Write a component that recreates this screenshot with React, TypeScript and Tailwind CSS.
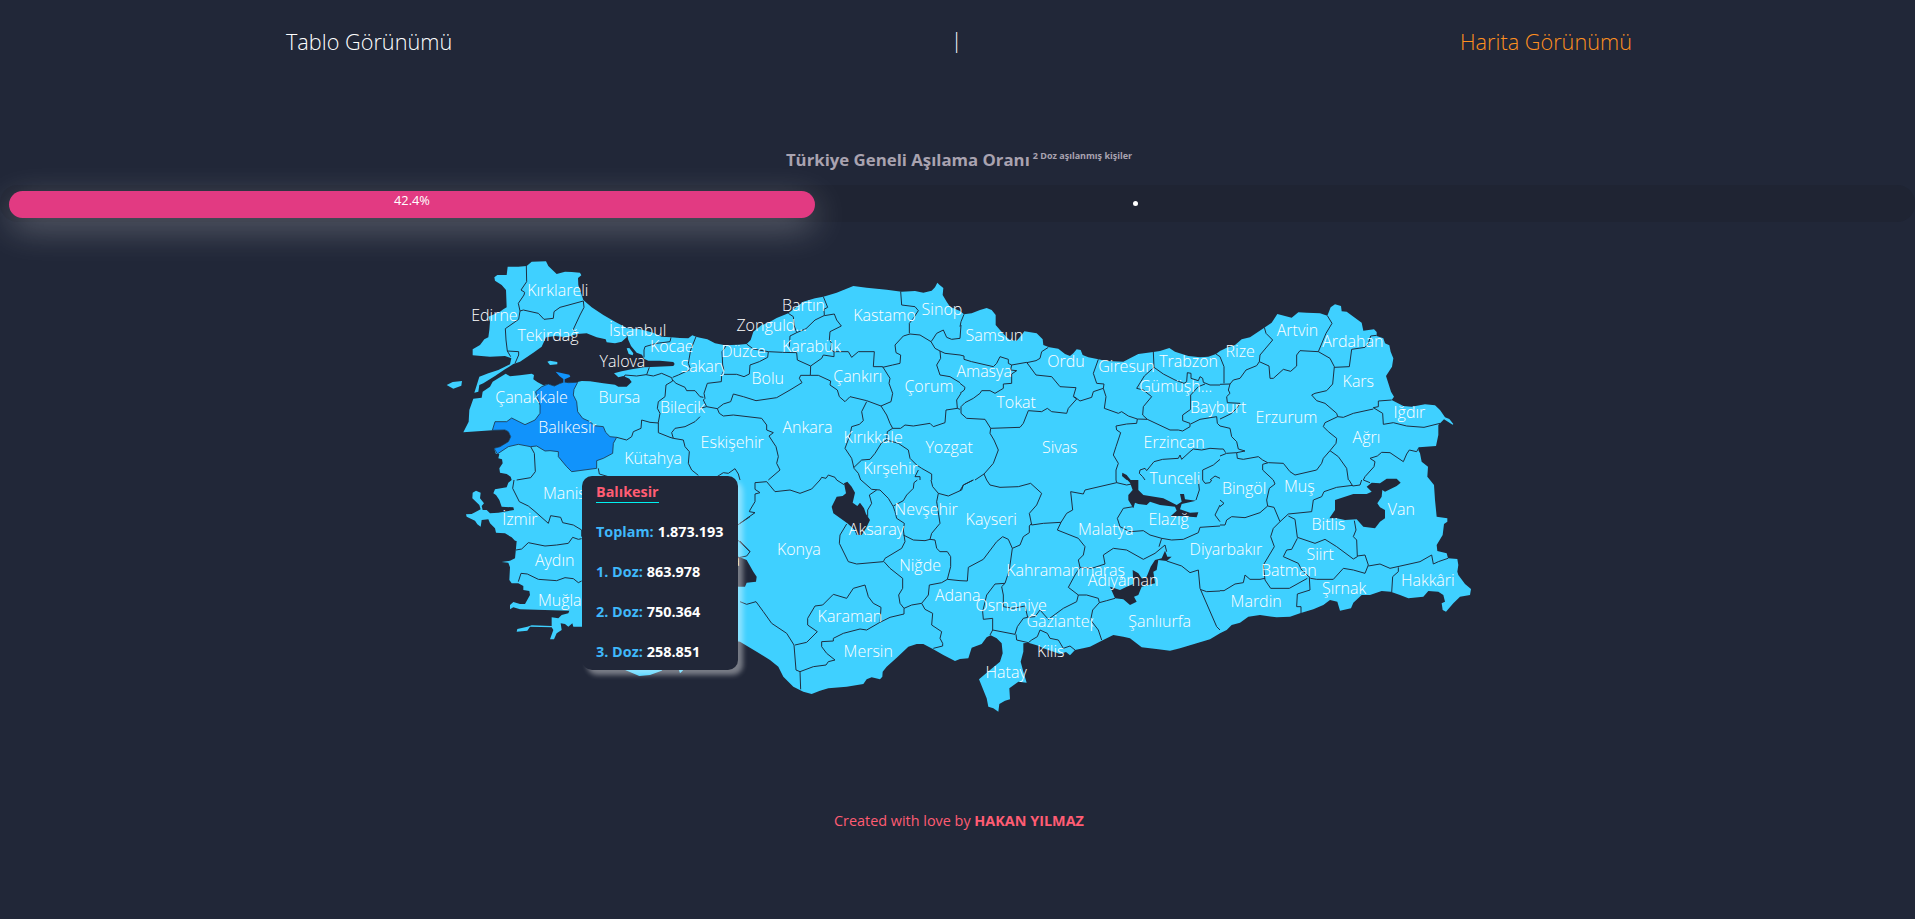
import React from 'react';

const SEA = '#212738';
const LAND = '#3fd0ff';
const ACTIVE = '#1193fb';

// The map is digitised on eight sheets; each sheet stores points at three units per map pixel.
const SHEETS = {
  A: [440, 250],
  B: [700, 250],
  C: [960, 250],
  D: [1220, 250],
  E: [440, 480],
  F: [740, 480],
  G: [960, 480],
  H: [1220, 480],
} as const;

type Sheet = keyof typeof SHEETS;

function project(sheet: Sheet, points: string): string {
  const [ox, oy] = SHEETS[sheet];
  return points
    .trim()
    .split(/\s+/)
    .map((pair) => {
      const [x, y] = pair.split(',').map(Number);
      return `${(ox + x / 3).toFixed(2)},${(oy + y / 3).toFixed(2)}`;
    })
    .join(' ');
}

const anatolia: [Sheet, string][] = [
  ['A', '70,547 86,515 88,480 100,446 125,443 128,425 150,410 158,395 175,385 197,371 210,379 240,376 275,371 282,375 280,388 293,397 310,406 325,402 343,408 358,401 372,396 385,398 413,396 425,393 450,394 490,400 525,404 535,410 560,410 575,396 568,386 550,378 535,382 522,370 545,364 575,358 612,352 650,350 700,348 704,342 700,336 660,332 625,332 612,326 606,314 590,308 573,288 564,268 560,235 600,238 640,248 665,260 693,262 720,264 745,265 757,256 768,260 780,263'],
  ['B', '22,268 45,280 75,286 115,284 140,282 152,270 160,245 185,225 205,218 230,204 265,190 290,170 310,155 345,145 370,140 410,128 460,108 500,113 560,119 605,125 645,123 670,128 695,122 705,112 712,98 718,104 730,114 728,135 740,155 750,170'],
  ['C', '0,183 12,193 35,190 60,180 80,174 95,180 107,195 107,225 120,240 140,262 150,270 170,272 185,255 193,244 230,250 248,268 250,285 268,292 295,296 315,312 330,318 340,310 350,298 362,300 368,315 385,322 415,328 440,333 490,335 510,325 535,312 580,306 600,303 628,294 645,305 685,318 720,322 745,320 768,312 780,303'],
  ['D', '20,293 45,285 65,268 90,262 135,232 155,218 172,192 215,203 235,187 260,188 300,190 322,197 332,172 345,163 363,168 365,184 380,185 425,218 430,242 462,238 470,246 470,258 490,265 495,280 508,286 512,305 520,325 516,350 498,378 505,400 513,425 522,440 515,450 550,468 575,470 615,463 645,466 660,480 675,502 688,507 700,522 698,524 672,508 655,525 655,555 648,588 597,592 595,600 600,610 605,635 624,650 622,680'],
  ['H', '630,0 642,15 645,60 650,110 682,115 682,125 672,132 668,165 650,195 652,213 680,220 684,235 712,237 715,255 712,275 715,285 735,312 753,327 750,345 720,350 700,370 678,395 668,390 665,370 675,365 670,345 655,335 625,333 610,350 565,355 540,345 512,335 485,333 450,345 425,345 400,368 393,385 360,392 352,365 330,360 310,375 280,388 240,400 210,410 170,412 120,405 85,410 60,428 35,435 20,450 0,460'],
  ['G', '750,478 710,490 660,505 630,512 595,508 545,502 510,475 490,470 460,465 425,482 390,500 345,510 330,526 318,516 300,522 250,505 235,497 205,488 190,490 190,515 182,545 190,575 200,608 175,605 148,625 150,658 135,662 118,672 115,695 100,685 85,680 80,655 57,598 90,570 120,545 128,520 125,490 110,475 92,466 80,472 65,492 35,503 25,535 0,537'],
  ['F', '645,543 610,525 580,508 550,492 530,492 505,500 470,533 440,560 428,575 427,590 420,598 395,592 380,598 370,612 320,620 265,625 240,632 215,642 190,635 160,620 130,590 115,560 90,540 50,515 0,485'],
  ['E', '870,480 780,500 735,560 728,572 720,580 716,568 690,540 665,572 630,585 598,588 550,568 500,500 460,450 425,440 400,440 397,430 385,440 375,432 362,430 365,450 350,460 342,478 330,478 340,450 335,442 270,440 262,452 230,455 232,447 262,440 275,436 335,438 335,412 355,415 365,405 385,400 388,392 240,388 220,382 210,388 210,375 220,366 240,372 255,372 270,345 268,333 250,330 250,318 235,310 215,310 208,300 210,262 205,248 185,246 210,242 225,235 228,205 230,183 225,182 215,172 195,160 168,158 165,145 150,130 145,118 125,120 122,140 112,133 105,122 80,110 78,103 95,102 108,95 122,88 118,75 97,55 98,38 108,32 122,38 120,55 132,70 125,78 128,90 140,90 150,100 175,98 222,90 220,82 185,80 178,60 168,45 160,40 165,28 200,22 205,8'],
  ['A', '215,690 212,680 200,672 180,668 178,655 188,640 186,628 175,625 178,612 168,612 162,595 180,590 205,575 212,560 205,545 195,540 157,541'],
];

const thrace = '260,48 275,35 318,34 325,48 350,72 375,65 395,66 420,68 424,76 414,84 415,105 430,150 455,172 490,195 525,215 545,226 562,235 560,262 545,275 525,280 500,277 497,268 470,262 440,250 410,252 380,262 345,258 318,262 305,290 280,308 240,335 220,342 195,358 165,378 130,400 118,405 115,425 103,428 112,400 118,380 145,370 175,360 210,343 214,325 195,318 150,320 98,316 98,298 120,285 133,268 145,262 148,240 150,215 145,200 180,185 190,178 200,172 198,120 185,105 165,92 163,82 172,75 200,75 203,50 235,50';

const islands = [
  '20,405 38,396 66,393 64,407 40,416',
  '322,335 330,332 352,336 352,343 330,345',
  '560,295 568,294 580,310 578,316 566,312',
];

const balikesir = [
  '413,397 402,418 400,435 410,455 413,485 428,505 450,515 463,527 490,530 497,547 510,560 530,562 520,580 518,610 490,625 470,632 470,655 395,665 380,650 355,620 355,605 330,602 315,603 290,588 272,590 235,583 205,590 172,612 162,595 180,590 205,575 212,560 205,545 195,540 157,541 165,515 200,515 215,504 255,524 285,510 300,490 300,465 290,440 287,425 305,410 325,402 343,408 358,401 372,396 385,398',
  '347,365 388,374 391,380 374,388 374,398 370,398 370,387 358,378',
];

const lakes: [Sheet, string][] = [
  ['F', '312,10 322,5 335,20 345,38 338,68 352,78 360,68 372,85 378,102 390,120 378,145 365,165 350,165 342,148 322,130 280,100 275,80 290,50 308,48 318,40'],
  ['F', '-20,225 0,232 20,240 40,275 50,290 48,305 20,308 15,320 -5,320 -20,300'],
  ['G', '615,212 622,230 635,230 620,243 595,240 590,270 580,275 585,310 565,315 545,320 535,345 522,350 530,365 510,375 490,358 465,355 450,320 480,330 500,320 520,312 518,270 535,280 545,295 560,290 572,260 585,240 605,235'],
  ['C', '487,668 500,675 512,690 500,690 486,678'],
  ['G', '502,0 535,0 535,30 550,45 610,55 650,75 665,65 660,42 672,42 675,58 708,62 665,72 660,88 690,98 715,97 710,112 660,108 630,110 650,92 645,80 600,75 570,65 560,75 535,72 525,68 520,85 505,60 505,45 518,30 510,8'],
  ['H', '440,20 455,8 480,10 500,-4 530,-4 542,8 530,18 495,35 487,30 485,50 472,70 480,82 495,90 495,115 480,125 465,145 430,140 410,118 375,120 350,115 328,115 345,90 345,60 400,42 440,42 455,35'],
];

const borders: Record<Sheet, string[]> = {
  A: [
    '259,47 260,95 243,120 254,127 252,135 235,160 240,183 236,208 196,236 198,270 202,303 236,305 236,315 225,340',
    '202,303 212,320',
    '240,183 250,180 295,190 312,208 340,205 342,185 360,172 375,168 430,153 432,172 420,195 400,238 405,245',
    '612,322 612,300 615,290 650,280 690,275 693,262',
    '768,260 752,300 745,340 752,358 715,375 698,382',
    '550,385 555,375 590,378 618,374 640,378 665,370 695,383 698,393 678,405 675,440 655,455 652,475 660,490 655,517 655,548 690,562 700,565',
    '628,352 620,374',
    '530,562 560,570 575,560 580,545 603,535 605,510 630,517 655,519',
    '698,390 708,400 735,412 740,422 765,422 780,440',
    '780,500 765,515 735,530 705,535 695,548 700,565 730,570 735,590 748,605 745,640 755,660 775,676',
    '475,655 478,672 505,680',
    '272,590 283,610 286,665 272,683 230,690',
  ],
  B: [
    '78,288 66,305 68,345 72,360 65,375 64,395 22,400 12,430 15,445 10,450 20,470',
    '0,440 10,442',
    '72,373 110,373 132,380 148,372 150,345 178,335 203,322 205,305',
    '140,282 160,297 205,305 248,307 290,308 292,330 332,348 331,376',
    '268,290 270,258 290,248',
    '265,190 280,200 282,225 290,248 318,236 345,210 372,197',
    '370,140 383,172 372,178 373,197 403,192 410,210 424,228 390,245 388,270 395,280 392,300 402,305 402,320 370,315 365,325 332,348',
    '402,305 445,305 455,322 475,305 523,305 520,350 548,350',
    '331,376 302,376 298,385 306,398 270,420 230,443 168,452 130,440 100,432 92,455 70,462 52,476 20,470 0,475',
    '331,376 355,376 392,393 390,405 412,420 418,440 435,455 450,440 500,452 543,468',
    '548,350 570,385 567,400 578,430 573,455 543,468',
    '548,352 578,345 600,340 602,315 588,308 585,285 610,258 630,252',
    '602,124 605,165 645,170 655,182 640,205 628,220 628,250',
    '630,252 660,255 693,275 697,270 710,250 730,240 740,262 755,268 780,265 783,225',
    '693,275 705,295 720,303 735,310 780,315',
    '720,303 722,325 710,345 720,375 750,380 780,398',
    '783,430 770,450 772,475',
    '578,535 602,535 615,525 640,528 690,520 700,530 735,518 738,480 772,475 780,478',
    '52,476 58,490 70,498 100,495 185,505 200,525 200,540 220,548 207,558 228,590 235,620 230,640 240,660 205,690',
    '500,455 485,485 490,512 478,523 455,530 450,555 435,595 455,625 462,655 475,670 482,690',
    '543,468 560,495 570,520 578,535 562,545 560,570',
    '462,652 485,630 510,628 525,610 545,578 560,570 595,580 625,600 630,625 650,645 665,655 695,672 695,690',
    '660,690 660,680 645,680 655,660',
    '360,690 365,682 378,685 385,675 405,682 410,690',
    '48,682 70,668 85,670 105,656 115,672 120,690',
  ],
  C: [
    '12,193 3,215 0,230',
    '0,315 12,318 12,328 35,335 100,350 110,340 120,320 145,328 145,340 155,345 200,337',
    '265,292 245,305 240,325 228,332 200,338',
    '155,345 152,360 170,362 155,372 155,400 130,402 130,415 105,430 90,422 65,422 60,430 40,445 15,458 3,470 3,490 20,505 75,508 92,535',
    '0,400 15,412 13,420 0,430',
    '200,337 228,375 275,380 300,410 348,413 340,440 350,447 325,475 320,490 275,485 262,475 245,485 205,482 190,520 180,532 92,535',
    '343,440 360,453 395,442 400,425 430,415',
    '415,328 400,370 410,400 432,402 430,415 438,440 433,475 475,490 485,485 505,498 532,507 562,508',
    '580,306 582,352 553,378 530,415 550,420 575,440 550,470 548,495 562,508 630,540 655,540 668,543 690,530 690,520 668,512 668,495 692,478 692,435 715,410 735,402',
    '582,352 610,372 645,390 672,400 680,395 682,368 693,370 693,385 715,392 720,380 728,385 730,397 750,405 780,405',
    '692,522 720,508 770,500 772,520 780,528',
    '532,507 530,520 500,522 468,528 470,540 482,548 468,590 460,615 475,640 468,660 468,690',
    '92,535 90,550 102,570 115,600 100,640 72,672 80,690',
    '72,672 45,690',
    '768,312 780,320',
    '555,690 548,680 538,670 540,660 555,655 560,662 582,635 608,628 655,625 660,615 665,628 690,605 700,597 725,600 750,595 780,597',
    '780,628 760,645 728,660 728,690',
    '750,690 765,678 780,685',
  ],
  D: [
    '0,320 12,350 12,400',
    '0,403 30,402 40,390 60,385 78,360 110,347 118,335',
    '133,232 138,250 158,270 120,315 118,335 147,348 150,385 160,385 190,358 212,364 230,348 230,315 240,302 295,305',
    '322,197 336,220 318,250 295,305 330,325 343,350 338,402 320,422 285,430 275,435 290,452 315,460 350,490 353,500 370,502 400,490 460,477',
    '470,256 452,258 445,280 435,292 395,298 388,350 343,352',
    '515,450 475,453 475,470 460,473 488,490 490,523 520,518 560,528 612,532 660,520',
    '353,500 315,518 310,530 325,545 350,565 348,580 330,602 310,625 305,640 290,660 225,675 210,665 190,640 145,638 128,643 128,660 160,690',
    '330,602 355,620 380,655 385,690',
    '597,592 590,605 568,600 560,612 550,635 510,608 485,607 472,618 450,625 465,635 462,650 435,680 430,690',
    '30,402 25,420 30,430 20,440 22,458 60,460 50,475 35,490 15,500 0,507',
    '0,528 30,535 35,560 50,575 55,597 75,603 50,608 20,610 0,618',
    '0,597 10,597 17,608',
    '50,608 52,625 70,628 115,620 128,630 143,638',
  ],
  E: [
    '222,0 218,25 238,65 265,78 282,92 325,130 332,107 362,112 368,128 400,135 425,150 425,170',
    '228,210 245,207 265,188 285,192 315,198 350,195 385,190 398,172 415,178 425,176',
    '235,305 243,280 262,282 295,298 350,302 375,293 400,296 415,308 425,303',
    '893,135 930,110',
    '893,180 930,215',
  ],
  F: [
    '0,130 25,112 45,98 28,95 30,90 45,65 45,42 60,38 45,28 45,8 80,5 105,35 150,30 180,40 215,27 240,0',
    '290,0 312,14',
    '363,0 395,28 420,30 445,55 460,80 465,95 470,115 493,130 490,150 495,185 485,205 435,235 430,245 350,252 325,245 298,190 300,165 320,132',
    '410,30 388,45 395,70 383,90 383,110',
    '460,78 490,62 500,45 520,25 522,8 532,0',
    '573,0 578,20 595,40 590,65 600,130 575,160 570,178',
    '595,40 625,48 665,30 670,15 700,0',
    '490,165 520,180 555,182 570,178 585,180 590,205 600,215 622,215 632,230 632,260 622,298 605,308 568,315 565,345 545,370',
    '432,245 450,265 488,295 488,325 476,345 480,370 492,385 515,375 545,370 555,388 578,400 575,435 605,455 600,475 608,490 608,498 580,505',
    '622,298 660,302',
    '492,385 492,402 450,412 418,428 380,450 360,447 310,460 280,475 280,483 245,485 245,500 260,520 285,540 265,545 258,555 220,560 180,575',
    '165,495 200,487 232,455 203,435 203,415 225,378 248,375 280,343 320,355 340,325 375,315 385,350 400,370 423,382 420,425',
    '0,365 20,373 48,365 70,395 95,430 140,460 162,495 168,570 180,575 182,628',
    '0,183 30,215 20,228 0,232',
  ],
  G: [
    '0,302 22,303 25,262 70,238 110,185 128,170 145,178 157,205 148,270 135,310',
    '157,205 180,195 190,170 208,158 208,138 215,130',
    '80,0 90,15 120,22 175,20 212,10 245,40 230,75 208,100 215,135 250,130 303,127',
    '0,32 10,15 40,0',
    '515,12 500,15 470,8 375,30 370,42 332,35 338,90 320,100 303,127 292,150 355,175 375,200 370,225 355,240 360,262 345,285 325,322 355,345 350,365 310,385 265,418 240,390 225,410 203,412',
    '470,8 468,0',
    '360,262 395,265 435,252 430,225 460,205 500,210 550,238 585,220 615,195 620,215',
    '203,412 195,378 160,385 130,380 130,345 125,320 135,310 105,312 80,345 68,395 70,418 98,415 98,450 90,465',
    '98,450 165,463 172,440 190,415 203,412',
    '168,463 170,480 205,488 215,480 232,470 240,450 262,460 270,475 295,480 310,505 330,498 345,510',
    '355,345 380,345 415,355 418,368 440,362 465,355',
    '418,368 398,390 392,420 415,450 425,480',
    '520,80 490,85 472,115 480,140 510,155 550,152 570,165 605,175 597,200',
    '605,175 635,180 670,178 715,158 720,142 780,138',
    '620,243 665,258 690,278 715,270 720,325 770,440 780,450',
    '720,328 740,335 780,333',
    '780,75 765,105 780,125',
    '715,0 718,30 708,60',
    '728,0 735,10 750,8 755,0',
  ],
  H: [
    '0,135 15,135 20,120 35,110 75,113 120,98 143,78 162,82 180,125 160,145 152,170 163,200 130,255 135,300 152,325 208,325 262,295',
    '160,0 165,12 148,25 140,60 143,78',
    '0,60 12,70 0,80',
    '180,125 205,102 275,95 280,60 305,50 312,35 350,22 398,16',
    '205,108 225,118 232,172 285,190 315,178 350,200 400,237 412,230 410,180 400,170 408,150 403,122',
    '232,175 215,208 200,210 190,230 235,250 245,270 272,295 290,298 340,298 370,265 400,270 435,280 445,255 435,225 412,228',
    '445,258 480,252 510,265 555,255 600,245 635,225 640,252 655,245 684,235',
    '535,262 535,275 518,290 515,338',
    '268,292 270,330 232,342 230,380 243,380 243,400',
    '0,332 12,332 45,312 70,308 75,285 90,298 120,298 135,295',
    '387,0 398,18 420,15 425,0',
    '430,0 450,8',
  ],
};

interface CityLabel {
  name: string;
  x: number;
  y: number;
  clip?: number;
}

const labels: CityLabel[] = [
  { name: 'Kırklareli', x: 526.8, y: 297 },
  { name: 'Edirne', x: 470.8, y: 322 },
  { name: 'Tekirdağ', x: 517, y: 342 },
  { name: 'İstanbul', x: 608.5, y: 337 },
  { name: 'Kocaeli', x: 649.5, y: 353, clip: 692.5 },
  { name: 'Sakarya', x: 680, y: 373, clip: 724 },
  { name: 'Yalova', x: 599.2, y: 368 },
  { name: 'Çanakkale', x: 494.8, y: 404 },
  { name: 'Bursa', x: 598.2, y: 404 },
  { name: 'Bilecik', x: 659.5, y: 414, clip: 705.5 },
  { name: 'Balıkesir', x: 537.8, y: 434, clip: 596 },
  { name: 'Kütahya', x: 623.8, y: 465 },
  { name: 'Bartın', x: 781.5, y: 312 },
  { name: 'Zonguld…', x: 736, y: 332 },
  { name: 'Düzce', x: 720.8, y: 358 },
  { name: 'Karabük', x: 781.5, y: 353 },
  { name: 'Kastamonu', x: 852.8, y: 322, clip: 915 },
  { name: 'Sinop', x: 921.2, y: 316 },
  { name: 'Bolu', x: 751.2, y: 385 },
  { name: 'Çankırı', x: 832.8, y: 383 },
  { name: 'Çorum', x: 904, y: 393 },
  { name: 'Ankara', x: 782, y: 434 },
  { name: 'Kırıkkale', x: 843.2, y: 444 },
  { name: 'Eskişehir', x: 700.2, y: 449 },
  { name: 'Kırşehir', x: 862.8, y: 475, clip: 918 },
  { name: 'Yozgat', x: 925, y: 454 },
  { name: 'Samsun', x: 965.2, y: 342 },
  { name: 'Amasya', x: 956, y: 378 },
  { name: 'Ordu', x: 1046.8, y: 368 },
  { name: 'Giresun', x: 1097.8, y: 373, clip: 1154.5 },
  { name: 'Trabzon', x: 1158.8, y: 368 },
  { name: 'Gümüşh…', x: 1138.8, y: 393 },
  { name: 'Tokat', x: 996, y: 408.5 },
  { name: 'Bayburt', x: 1189.5, y: 414 },
  { name: 'Sivas', x: 1041.5, y: 454 },
  { name: 'Erzincan', x: 1143.2, y: 449 },
  { name: 'Tunceli', x: 1149, y: 485, clip: 1200 },
  { name: 'Artvin', x: 1276.3, y: 337 },
  { name: 'Ardahan', x: 1321.8, y: 348 },
  { name: 'Rize', x: 1225.2, y: 358 },
  { name: 'Kars', x: 1342.2, y: 388 },
  { name: 'Iğdır', x: 1393.2, y: 419 },
  { name: 'Erzurum', x: 1255.2, y: 424 },
  { name: 'Ağrı', x: 1352.2, y: 444 },
  { name: 'Manisa', x: 542.5, y: 500 },
  { name: 'İzmir', x: 501.8, y: 526 },
  { name: 'Aydın', x: 534.5, y: 567 },
  { name: 'Muğla', x: 537.5, y: 607 },
  { name: 'Isparta', x: 690, y: 567 },
  { name: 'Nevşehir', x: 894.2, y: 516 },
  { name: 'Aksaray', x: 848.4, y: 536 },
  { name: 'Konya', x: 776.5, y: 556 },
  { name: 'Niğde', x: 898.8, y: 572 },
  { name: 'Adana', x: 934.5, y: 602 },
  { name: 'Karaman', x: 817.2, y: 623 },
  { name: 'Mersin', x: 843.2, y: 658 },
  { name: 'Kayseri', x: 965.2, y: 526 },
  { name: 'Malatya', x: 1077.5, y: 536 },
  { name: 'Kahramanmaraş', x: 1005.8, y: 577 },
  { name: 'Adıyaman', x: 1087.4, y: 587 },
  { name: 'Osmaniye', x: 975, y: 612 },
  { name: 'Gaziantep', x: 1026, y: 628, clip: 1093 },
  { name: 'Kilis', x: 1036.5, y: 658 },
  { name: 'Hatay', x: 985.2, y: 679 },
  { name: 'Şanlıurfa', x: 1127.8, y: 628 },
  { name: 'Elazığ', x: 1148.2, y: 526 },
  { name: 'Diyarbakır', x: 1189.2, y: 556 },
  { name: 'Bingöl', x: 1221.5, y: 495 },
  { name: 'Muş', x: 1283.5, y: 493 },
  { name: 'Van', x: 1387.3, y: 516 },
  { name: 'Bitlis', x: 1311.2, y: 531 },
  { name: 'Siirt', x: 1306, y: 561 },
  { name: 'Batman', x: 1260.5, y: 577 },
  { name: 'Şırnak', x: 1321.5, y: 595 },
  { name: 'Mardin', x: 1230.2, y: 608 },
  { name: 'Hakkâri', x: 1400.5, y: 587 },
];

const doses = [
  { label: 'Toplam:', value: '1.873.193' },
  { label: '1. Doz:', value: '863.978' },
  { label: '2. Doz:', value: '750.364' },
  { label: '3. Doz:', value: '258.851' },
];

function Header() {
  return (
    <header className="flex h-[84px] items-center justify-between pl-[286px] pr-[283px] text-[21.7px] font-light text-white">
      <a>Tablo Görünümü</a>
      <span className="pb-[3px] pl-px">|</span>
      <a className="text-[#ff9020]">Harita Görünümü</a>
    </header>
  );
}

function VaccinationRate() {
  return (
    <section className="pt-[64px]">
      <h1 className="flex h-[24px] items-center justify-center pl-[3px] text-[16.8px] font-bold text-[#a9a3b0]">
        <span>Türkiye Geneli Aşılama Oranı</span>
        <sup className="ml-[3px] text-[9px]">2 Doz aşılanmış kişiler</sup>
      </h1>
      <div className="mt-[13px] flex h-[37px] items-start rounded-[18px] bg-[#1f2433] px-[9px] pt-[6px]">
        <div className="flex h-[27px] w-[806px] justify-center rounded-[13.5px] bg-[#e23a82] text-[12.8px] leading-[18px] text-white shadow-[0_10px_35px_rgba(255,255,255,0.29)]">
          42.4%
        </div>
        <div className="ml-[318px] mt-[10px] size-[5px] rounded-full bg-white" />
      </div>
    </section>
  );
}

function Tooltip() {
  return (
    <div className="absolute left-[142px] top-[226px] h-[194px] w-[156px] rounded-[10px] bg-[#212738] pl-[14px] pt-[6px] text-[14.4px] font-bold text-white shadow-[5px_5px_5px_rgba(255,255,255,0.4)]">
      <div className="w-fit border-b border-[#00f0f0] leading-[20px] text-[#ff5c73]">Balıkesir</div>
      <div className="pt-[4px]">
        {doses.map((dose) => (
          <div key={dose.label} className="flex h-[40px] items-center gap-[4px] pt-[10px] leading-[20px]">
            <span className="text-[#3fb8fb]">{dose.label}</span>
            <span>{dose.value}</span>
          </div>
        ))}
      </div>
    </div>
  );
}

function Label({ name, x, y, clip }: CityLabel) {
  if (clip === undefined) {
    return (
      <text x={x} y={y}>
        {name}
      </text>
    );
  }
  return (
    <svg x={x} y={y - 20} width={clip - x} height={26} overflow="hidden">
      <text x={0} y={20}>
        {name}
      </text>
    </svg>
  );
}

function TurkeyMap() {
  return (
    <div className="relative mx-auto mt-[28px] h-[470px] w-[1035px]">
      <svg viewBox="440 250 1035 470" className="block h-[470px] w-[1035px]">
        <g fill={LAND}>
          <polygon points={anatolia.map(([sheet, pts]) => project(sheet, pts)).join(' ')} />
          <polygon points={project('A', thrace)} />
          {islands.map((pts) => (
            <polygon key={pts} points={project('A', pts)} />
          ))}
        </g>
        <g fill="none" stroke="#1d2f42" strokeWidth={1} strokeLinejoin="round">
          {(Object.keys(borders) as Sheet[]).flatMap((sheet) =>
            borders[sheet].map((pts) => <polyline key={sheet + pts} points={project(sheet, pts)} />),
          )}
        </g>
        <polygon points={project('A', balikesir[0])} fill={ACTIVE} stroke="#1d2f42" strokeWidth={0.8} />
        <polygon points={project('A', balikesir[1])} fill={ACTIVE} />
        {lakes.map(([sheet, pts]) => (
          <polygon key={pts} points={project(sheet, pts)} fill={SEA} />
        ))}
        <g fill="#ffffff" transform="translate(0.4 -0.6)" className="text-[16px] font-light">
          {labels.map((label) => (
            <Label key={label.name} {...label} />
          ))}
        </g>
      </svg>
      <Tooltip />
    </div>
  );
}

export default function App() {
  return (
    <div className="h-[919px] w-full overflow-hidden bg-[#212738] font-['Open_Sans','Noto_Sans',sans-serif]">
      <Header />
      <VaccinationRate />
      <TurkeyMap />
      <footer className="mt-[91px] pl-[3px] text-center text-[14.4px] leading-[20px] text-[#ff5c73]">
        Created with love by <strong className="font-bold">HAKAN YILMAZ</strong>
      </footer>
    </div>
  );
}
